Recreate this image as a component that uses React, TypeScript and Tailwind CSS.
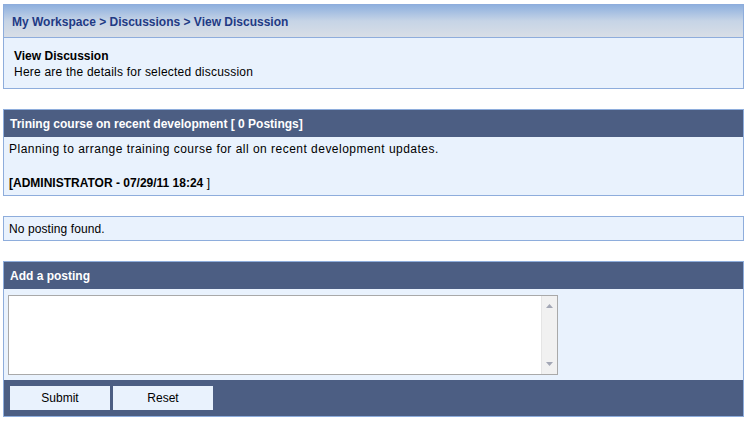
import React from "react";

const font = { fontFamily: '"Liberation Sans", Arial, sans-serif' };

function Panel({ children, className = "" }: { children: React.ReactNode; className?: string }) {
    return <section className={`mx-[3px] border border-[#8eaddc] bg-[#e9f2fd] ${className}`}>{children}</section>;
}

function DarkBar({ children, className = "" }: { children?: React.ReactNode; className?: string }) {
    return <div className={`bg-[#4c5e83] text-white font-bold ${className}`}>{children}</div>;
}

export default function App() {
    return (
        <div className="min-h-[422px] w-[747px] bg-white pt-[4px] text-[12px] text-black" style={font}>
            {/* page heading */}
            <Panel>
                <div className="flex h-[33px] items-center border-b border-[#8eaddc] bg-gradient-to-b from-[#8fb0de] via-[#c6d4e6] to-[#d8dee6] px-[8px] pt-[1px] font-bold text-[#1f3a84]">
                    My Workspace &gt; Discussions &gt; View Discussion
                </div>
                <div className="h-[50px] px-[10px] pt-[10px] leading-[16px]">
                    <div className="font-bold">View Discussion</div>
                    <div className="tracking-[0.22px]">Here are the details for selected discussion</div>
                </div>
            </Panel>

            {/* discussion */}
            <Panel className="mt-[20px]">
                <DarkBar className="flex h-[27px] items-center px-[6px]">Trining course on recent development [ 0 Postings]</DarkBar>
                <div className="h-[58px] px-[5px] pt-[4px] leading-[17px]">
                    <div className="tracking-[0.48px]">Planning to arrange training course for all on recent development updates.</div>
                    <div>&nbsp;</div>
                    <div>
                        <span className="font-bold">[ADMINISTRATOR - 07/29/11 18:24</span> ]
                    </div>
                </div>
            </Panel>

            <Panel className="mt-[20px]">
                <div className="flex h-[23px] items-center px-[5px] tracking-[0.1px]">No posting found.</div>
            </Panel>

            {/* add a posting */}
            <Panel className="mt-[20px]">
                <DarkBar className="flex h-[27px] items-center px-[6px]">Add a posting</DarkBar>
                <div className="h-[91px] px-[4px] pt-[6px]">
                    <div className="flex h-[80px] w-[550px] border border-[#a9a9a9] bg-white">
                        <textarea className="h-full flex-1 resize-none bg-white outline-none" />
                        <div className="flex w-[16px] flex-col items-center justify-between border-l border-[#e5e5e5] bg-[#f1f1f1] py-[8px]">
                            <svg width="7" height="4" viewBox="0 0 7 4"><path d="M0 4L3.5 0L7 4Z" fill="#a3a7b5" /></svg>
                            <svg width="7" height="4" viewBox="0 0 7 4"><path d="M0 0L3.5 4L7 0Z" fill="#a3a7b5" /></svg>
                        </div>
                    </div>
                </div>
                <DarkBar className="flex h-[36px] items-center gap-[3px] px-[6px] font-normal">
                    <button className="h-[24px] w-[100px] bg-[#e9f2fd] text-[12px] text-black">Submit</button>
                    <button className="h-[24px] w-[100px] bg-[#e9f2fd] text-[12px] text-black">Reset</button>
                </DarkBar>
            </Panel>
        </div>
    );
}
